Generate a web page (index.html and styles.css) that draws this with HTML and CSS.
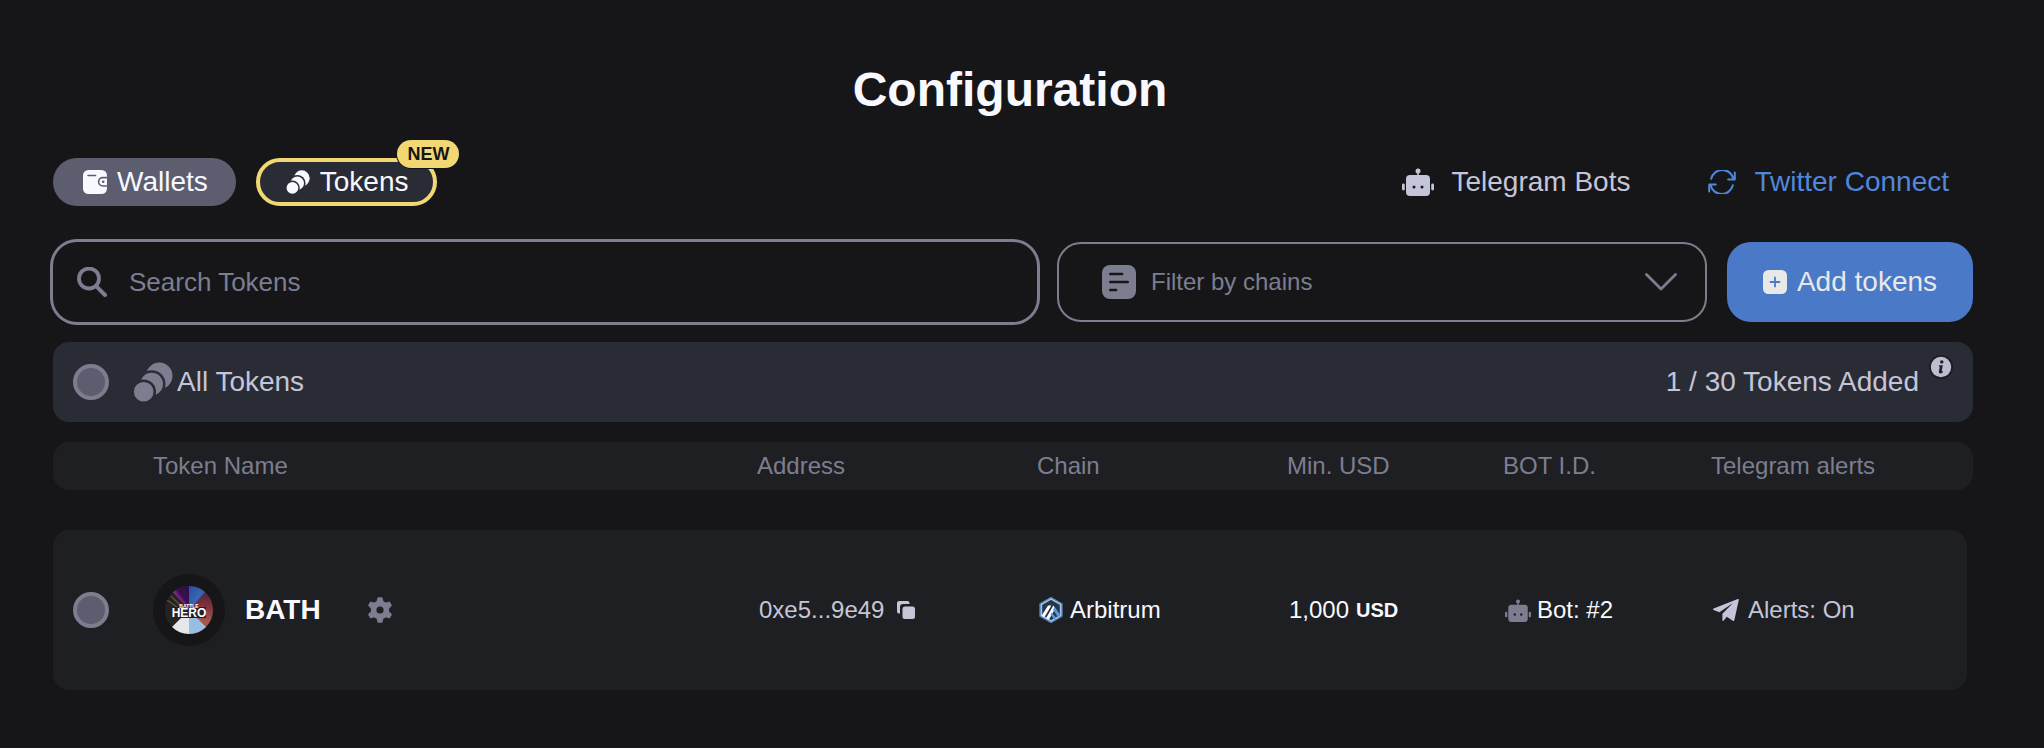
FILE: index.html
```html
<!DOCTYPE html>
<html lang="en">
<head>
<meta charset="utf-8">
<title>Configuration</title>
<link rel="stylesheet" href="styles.css">
</head>
<body>
<svg class="defs" width="0" height="0" aria-hidden="true">
  <symbol id="coins" viewBox="0 0 40 40">
    <circle cx="26.3" cy="13.8" r="13.2"/>
    <circle class="gap" cx="18.7" cy="22" r="13.8"/>
    <circle cx="18.7" cy="22" r="11.3"/>
    <circle class="gap" cx="10.7" cy="29.8" r="12.3"/>
    <circle cx="10.7" cy="29.8" r="9.8"/>
  </symbol>
  <symbol id="bot" viewBox="0 0 32 28">
    <circle cx="16" cy="3" r="2.5"/>
    <path d="M15.2 4h1.6v4h-1.6z"/>
    <rect x="4" y="7" width="24" height="21" rx="4"/>
    <rect x="0" y="15.5" width="2.8" height="7" rx="1.4"/>
    <rect x="29.2" y="15.5" width="2.8" height="7" rx="1.4"/>
    <circle class="gap" cx="12" cy="19" r="1.5"/>
    <circle class="gap" cx="20" cy="19" r="1.5"/>
  </symbol>
</svg>
<main class="page">
  <h1 class="title">Configuration</h1>

  <div class="toolbar">
    <div class="tabs">
      <button class="tab tab-wallets" type="button">
        <svg class="icon-24" viewBox="0 0 24 24" aria-hidden="true">
          <rect width="24" height="24" rx="5.5" fill="currentColor"/>
          <path d="M5 5.5h7.5" stroke="#5c5e6f" stroke-width="1.6" stroke-linecap="round"/>
          <path d="M24.800 7.600h-5a4.200 4.200 0 0 0 0 8.400h5" fill="currentColor" stroke="#5c5e6f" stroke-width="1.6"/>
          <circle cx="20.2" cy="11.8" r="1.3" fill="#5c5e6f"/>
        </svg>
        Wallets
      </button>
      <button class="tab tab-tokens" type="button">
        <svg class="icon-24" aria-hidden="true"><use href="#coins"/></svg>
        Tokens
        <span class="badge">NEW</span>
      </button>
    </div>
    <nav class="links">
      <a class="link" href="#bots">
        <svg class="bot-icon" aria-hidden="true"><use href="#bot"/></svg>
        Telegram Bots
      </a>
      <a class="link link-blue" href="#twitter">
        <svg class="sync-icon line" viewBox="0 0 28 24" stroke="currentColor" stroke-width="2" stroke-linecap="round" stroke-linejoin="round" aria-hidden="true">
          <path d="M3.200 8.800A11.400 11.400 0 0 1 25.500 9.200M26.800 2.400v7.200h-6.600M24.800 15.200A11.400 11.400 0 0 1 2.500 14.800M1.200 21.600v-7.200h6.600"/>
        </svg>
        Twitter Connect
      </a>
    </nav>
  </div>

  <div class="filters">
    <label class="search">
      <svg class="search-icon line" viewBox="0 0 30 30" stroke="currentColor" stroke-linecap="round" aria-hidden="true">
        <circle cx="12" cy="11.500" r="10" stroke-width="3.800"/>
        <path d="M19.600 19.600l8.400 8.400" stroke-width="4"/>
      </svg>
      <input class="search-input" type="text" placeholder="Search Tokens" aria-label="Search Tokens">
    </label>
    <div class="chain-filter">
      <svg class="filter-icon" viewBox="0 0 34 34" aria-hidden="true">
        <rect width="34" height="34" rx="8" fill="currentColor"/>
        <path d="M8.2 9h12M8.2 17h17.6M8.2 25h6" stroke="#161618" stroke-width="2.4" stroke-linecap="round"/>
      </svg>
      <select class="chain-select" aria-label="Filter by chains">
        <option>Filter by chains</option>
      </select>
      <svg class="chevron line" viewBox="0 0 32 18" stroke="currentColor" stroke-width="2.8" stroke-linecap="round" stroke-linejoin="round" aria-hidden="true">
        <path d="M1.500 1.500L16 16 30.500 1.500"/>
      </svg>
    </div>
    <button class="add" type="button">
      <svg class="icon-24" viewBox="0 0 24 24" aria-hidden="true">
        <rect width="24" height="24" rx="5.5" fill="currentColor"/>
        <path d="M12 7.500v9M7.500 12h9" stroke="#4a79c7" stroke-width="1.8" stroke-linecap="round"/>
      </svg>
      Add tokens
    </button>
  </div>

  <section class="summary">
    <input class="check" type="checkbox" aria-label="Select all tokens">
    <svg class="coins-icon" aria-hidden="true"><use href="#coins"/></svg>
    <span>All Tokens</span>
    <span class="count">1 / 30 Tokens Added</span>
    <svg class="info-icon" viewBox="0 0 24 24" aria-hidden="true">
      <circle cx="12" cy="12" r="12" fill="#1c1d22"/>
      <circle cx="12" cy="12" r="10.2" fill="#bcbdcf"/>
      <circle cx="12.8" cy="6.900" r="1.700" fill="#1c1d22"/>
      <path d="M10 10.200h3.800l-1.200 6.200 1.400-.4-.3 1.600c-1.800 1.400-4.200 1.200-3.800-.8l.9-5.200h-1z" fill="#1c1d22"/>
    </svg>
  </section>

  <table class="tokens">
    <thead>
      <tr class="row head">
        <th></th><th>Token Name</th><th>Address</th><th>Chain</th><th>Min. USD</th><th>BOT I.D.</th><th>Telegram alerts</th>
      </tr>
    </thead>
    <tbody>
      <tr class="row body">
        <td class="pick"><input class="check" type="checkbox" aria-label="Select BATH"></td>
        <td class="name">
          <span class="avatar">
            <svg class="logo" viewBox="0 0 48 48" role="img" aria-label="Battle Hero">
              <defs>
                <clipPath id="disc"><circle cx="24" cy="24" r="24"/></clipPath>
                <linearGradient id="night" x1="0" y1="1" x2="1" y2="0"><stop offset="0" stop-color="#8a2a96"/><stop offset=".45" stop-color="#8d2593"/><stop offset=".6" stop-color="#3a0f50"/><stop offset="1" stop-color="#2c1144"/></linearGradient>
                <linearGradient id="sky" x1="0" y1="0" x2="1" y2="1"><stop offset="0" stop-color="#2a4f9c"/><stop offset=".5" stop-color="#3766b8"/><stop offset="1" stop-color="#152449"/></linearGradient>
                <linearGradient id="ember" x1="0" y1="0" x2="0" y2="1"><stop offset="0" stop-color="#3c2036"/><stop offset=".4" stop-color="#7c3140"/><stop offset=".75" stop-color="#a4584c"/></linearGradient>
              </defs>
              <g clip-path="url(#disc)">
                <path d="M0 0h24v48H0z" fill="#25231f"/>
                <path d="M24 0h24v48H24z" fill="url(#ember)"/>
                <path d="M24 24V0H6v4z" fill="url(#night)"/>
                <path d="M24 24V0h18v4z" fill="url(#sky)"/>
                <path d="M2 14l17 12M6 10l12 12" stroke="#5f5540" stroke-width="1.200"/>
                <path d="M24 24L6 42v6h18z" fill="#e6e7eb"/>
                <path d="M24 24v24h18v-6z" fill="#98bee3"/>
                <path d="M7 21h34v11H7z" fill="#211f2b"/>
              </g>
              <text class="logo-small" x="24" y="22" text-anchor="middle">BATTLE</text>
              <text class="logo-big" x="24" y="31" text-anchor="middle">HERO</text>
            </svg>
          </span>
          <span>BATH</span>
          <button class="plain" type="button" aria-label="Token settings">
            <svg class="gear" viewBox="0 0 26 26" aria-hidden="true">
              <path fill="currentColor" stroke="currentColor" stroke-width="1.600" stroke-linejoin="round" fill-rule="evenodd" d="M11.300 1h3.400l1 3.700 2.900 1.700 3.600-1 1.800 3.100-2.700 2.700v3.600l2.700 2.700-1.800 3.100-3.600-1-2.900 1.700-1 3.700h-3.400l-1-3.700-2.900-1.700-3.600 1L2 17.500l2.700-2.700v-3.600L2 8.500l1.800-3.100 3.600 1 2.900-1.700zM13 8.600a4.400 4.400 0 1 0 0 8.800 4.400 4.400 0 0 0 0-8.800z"/>
            </svg>
          </button>
        </td>
        <td class="cell muted">
          0xe5...9e49
          <button class="plain copy" type="button" aria-label="Copy address">
            <svg class="copy-icon" viewBox="0 0 18 18" aria-hidden="true">
              <path fill="currentColor" d="M2 0h8.500a2 2 0 0 1 2 2v1H6a3 3 0 0 0-3 3v6.500H2a2 2 0 0 1-2-2V2a2 2 0 0 1 2-2z"/>
              <rect x="5.500" y="5.500" width="12.500" height="12.500" rx="2.500" fill="currentColor"/>
            </svg>
          </button>
        </td>
        <td class="cell">
          <svg class="arb" viewBox="0 0 24 26" aria-hidden="true">
            <path d="M12 1.500l10 5.700v11.600l-10 5.700-10-5.700V7.200z" fill="#27374a" stroke="#a4c4e4" stroke-width="2.400"/>
            <path d="M12 .6l11 6.200v12.400L12 25.400 1 19.200V6.800z" fill="none" stroke="#4b7cb8" stroke-width="1.200"/>
            <path d="M2.600 18.800L9 8.400h3.400L5.400 20.200zM7 21.200l7.400-12.600 1.800 3L10 22.400z" fill="#fff"/>
            <path d="M14 12.600l1.800-2.600 5.600 8.200-2.600 1.800zM12.600 15.600l4.600 5.200-2 1.600-3.600-4.800z" fill="#5a97e0"/>
          </svg>
          Arbitrum
        </td>
        <td class="cell usd">1,000 <b class="unit">USD</b></td>
        <td class="cell bot-cell">
          <svg class="bot-small" aria-hidden="true"><use href="#bot"/></svg>
          Bot: #2
        </td>
        <td class="cell muted">
          <svg class="plane" viewBox="0 0 26 22" aria-hidden="true">
            <path fill="currentColor" d="M24.800 0L.6 9.400c-.8.400-.8 1.200 0 1.500l5.800 2.400L20 4 9.400 14.800v6.400c0 .8.600 1 1.100.5l3.300-3.900 6 3.900c.8.400 1.400.2 1.600-.8L25.800 1c.1-.8-.3-1.200-1-1z"/>
          </svg>
          Alerts: On
        </td>
      </tr>
    </tbody>
  </table>
</main>
</body>
</html>
```

FILE: styles.css
```css
* { box-sizing: border-box; }

body {
  margin: 0;
  background: #161618;
  color: #f8f8ff;
  font: 24px/28px "Liberation Sans", Arial, Helvetica, sans-serif;
}

button, input, select { font: inherit; }
svg { display: block; flex: none; fill: currentColor; }
.line { fill: none; }
.defs { position: absolute; }
.gap { fill: var(--surface); }

.page { padding: 60px 71px 58px 53px; }

.title {
  margin: 0 6px 38px 0;
  font-size: 48px;
  line-height: 60px;
  text-align: center;
}

.toolbar {
  display: flex;
  justify-content: space-between;
  align-items: center;
  margin-bottom: 36px;
  font-size: 28px;
}
.tabs { display: flex; gap: 20px; }
.tab {
  position: relative;
  display: flex;
  align-items: center;
  gap: 10px;
  height: 48px;
  padding: 0 28px 0 30px;
  border: 0;
  border-radius: 24px;
  color: #f8f8ff;
}
.tab-wallets { background: #5c5e6f; }
.tab-tokens {
  --surface: #2a2c35;
  padding: 0 25px 0 26px;
  border: 4px solid #f1d873;
  background: #2a2c35;
}
.icon-24 { width: 24px; height: 24px; }
.badge {
  position: absolute;
  top: -22px;
  right: -26px;
  padding: 0 10px;
  border-radius: 14px;
  background: #f1d873;
  box-shadow: 0 0 0 1px #161618;
  color: #161618;
  font-size: 18px;
  font-weight: bold;
  line-height: 28px;
}

.links { display: flex; gap: 78px; padding-right: 24px; }
.link {
  --surface: #161618;
  display: flex;
  align-items: center;
  gap: 18px;
  color: #c4c5d8;
  text-decoration: none;
}
.link-blue { color: #5087db; }
.bot-icon { width: 32px; height: 28px; }
.sync-icon { width: 28px; height: 24px; }

.filters {
  display: grid;
  grid-template-columns: 984fr 650fr 246fr;
  gap: 20px;
  margin-bottom: 20px;
  color: #7c7e90;
}
.search {
  display: flex;
  align-items: center;
  gap: 22px;
  height: 80px;
  padding: 0 24px;
  border-radius: 24px;
  box-shadow: 0 0 0 3px #7c7e90;
  font-size: 26px;
}
.search-icon { width: 30px; height: 30px; }
.search-input {
  flex: 1;
  min-width: 0;
  padding: 0;
  border: 0;
  outline: 0;
  background: none;
  color: #f8f8ff;
}
.search-input::placeholder { color: #7c7e90; opacity: 1; }

.chain-filter {
  display: flex;
  align-items: center;
  gap: 15px;
  padding: 0 28px 0 43px;
  border: 2px solid #7c7e90;
  border-radius: 24px;
}
.filter-icon { width: 34px; height: 34px; }
.chain-select {
  flex: 1;
  min-width: 0;
  padding: 0;
  border: 0;
  appearance: none;
  background: none;
  color: #7c7e90;
}
.chevron { width: 32px; height: 18px; }

.add {
  display: flex;
  align-items: center;
  justify-content: center;
  gap: 10px;
  padding: 0;
  border: 0;
  border-radius: 24px;
  background: #4a79c7;
  color: #e8e8e8;
  font-size: 28px;
}

.summary {
  --surface: #2a2c35;
  display: flex;
  align-items: center;
  height: 80px;
  margin-bottom: 20px;
  padding: 0 20px;
  border-radius: 16px;
  background: #2a2c35;
  color: #c4c5d8;
  font-size: 28px;
}
.check {
  flex: none;
  width: 36px;
  height: 36px;
  margin: 0;
  border: 4px solid #7c7e90;
  border-radius: 50%;
  appearance: none;
  background: #5c5e6f;
}
.coins-icon { width: 40px; height: 40px; margin: 0 4px 0 24px; color: #7c7e90; }
.count { margin-left: auto; }
.info-icon { align-self: flex-start; width: 24px; height: 24px; margin: 13px 0 0 10px; }

.tokens, .tokens thead, .tokens tbody { display: block; }
.row {
  display: grid;
  grid-template-columns: 100px 604fr 280fr 250fr 216fr 208fr 262fr;
  align-items: center;
  border-radius: 16px;
  background: #1e1f23;
}
th, td { padding: 0; }
th { color: #7c7e90; font-weight: normal; text-align: left; }
.head { height: 48px; margin-bottom: 40px; }
.body {
  --surface: #1e1f23;
  grid-template-columns: 100px 604fr 280fr 250fr 216fr 208fr 256fr;
  height: 160px;
  margin-right: 6px;
}
.pick { display: flex; padding-left: 20px; }
.name {
  display: flex;
  align-items: center;
  gap: 20px;
  font-size: 28px;
  font-weight: bold;
}
.avatar { padding: 12px; border-radius: 50%; background: #161618; }
.logo { width: 48px; height: 48px; }
.logo-small, .logo-big { fill: #fff; font-weight: bold; }
.logo-small { font-size: 5px; }
.logo-big { font-size: 12px; }
.plain { padding: 0; border: 0; background: none; color: inherit; }
.name .plain { margin-left: 26px; color: #7c7e90; }
.gear { width: 26px; height: 26px; }
.cell { display: flex; align-items: center; gap: 7px; padding-left: 2px; }
.muted { color: #c4c5d8; gap: 9px; }
.copy { margin-left: 4px; }
.copy-icon { width: 18px; height: 18px; }
.arb { width: 24px; height: 26px; }
.unit { font-size: 20px; }
.bot-cell { gap: 6px; }
.bot-small { width: 26px; height: 23px; color: #7c7e90; }
.plane { width: 26px; height: 22px; }
```
